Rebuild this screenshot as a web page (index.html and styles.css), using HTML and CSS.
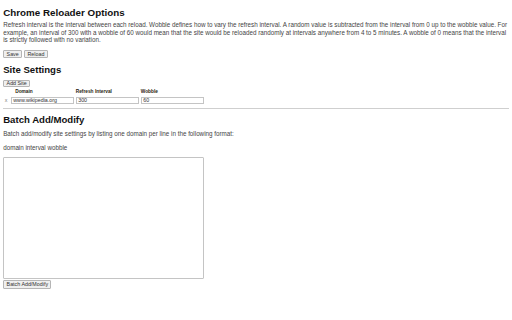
FILE: index.html
```html
<!DOCTYPE html>
<html>
<head>
<meta charset="utf-8">
<title>Chrome Reloader Options</title>
<link rel="stylesheet" href="styles.css">
</head>
<body class="page">
  <h1 class="title">Chrome Reloader Options</h1>
  <p class="intro">Refresh interval is the interval between each reload. Wobble defines how to vary the refresh interval. A random value is subtracted from the interval from 0 up to the wobble value. For example, an interval of 300 with a wobble of 60 would mean that the site would be reloaded randomly at intervals anywhere from 4 to 5 minutes. A wobble of 0 means that the interval is strictly followed with no variation.</p>
  <div class="actions">
    <button class="btn">Save</button>
    <button class="btn">Reload</button>
  </div>

  <h2 class="section section-site">Site Settings</h2>
  <div class="add-row"><button class="btn">Add Site</button></div>
  <div class="sites">
    <span class="col-head col-domain">Domain</span>
    <span class="col-head">Refresh Interval</span>
    <span class="col-head">Wobble</span>
    <span class="remove">X</span>
    <input class="field" type="text" value="www.wikipedia.org">
    <input class="field" type="text" value="300">
    <input class="field" type="text" value="60">
  </div>
  <hr class="rule">

  <h2 class="section section-batch">Batch Add/Modify</h2>
  <p class="note note-first">Batch add/modify site settings by listing one domain per line in the following format:</p>
  <p class="note">domain interval wobble</p>
  <textarea class="batch"></textarea>
  <div class="batch-actions"><button class="btn">Batch Add/Modify</button></div>
</body>
</html>
```
FILE: styles.css
```css
html, body {
  margin: 0;
  background: #ffffff;
}
.page {
  padding: 3px 3.2px 0 3.2px;
  font-family: "Liberation Sans", Arial, sans-serif;
  font-size: 6.28px;
  color: #333;
}
.title {
  margin: 3.6px 0 0 0;
  font-size: 9.8px;
  line-height: 11px;
  font-weight: bold;
  color: #111;
}
.intro {
  margin: 3.9px 0 0 0;
  line-height: 7.36px;
  color: #444;
}
.actions {
  margin-top: 6.7px;
  display: flex;
  gap: 2px;
}
.btn {
  font-family: "Liberation Sans", Arial, sans-serif;
  font-size: 5.33px;
  line-height: 5px;
  padding: 0.5px 2.4px;
  border: 1px solid #b5b5b5;
  border-radius: 1px;
  background: #efefef;
  color: #333;
  margin: 0;
}
.section {
  margin: 0;
  font-size: 9.6px;
  line-height: 11px;
  font-weight: bold;
  color: #111;
}
.section-site { margin-top: 5.8px; }
.add-row {
  margin-top: 4.8px;
  display: flex;
}
.add-row .btn { line-height: 4.5px; }
.sites {
  margin-top: 2px;
  display: grid;
  grid-template-columns: 6px 63.5px 63.5px 63.5px;
  column-gap: 1.5px;
  row-gap: 1.4px;
  align-items: center;
}
.col-head {
  font-size: 4.8px;
  line-height: 6px;
  font-weight: bold;
  color: #2a1d10;
}
.col-domain {
  grid-column: 2;
  padding-left: 4.5px;
}
.remove {
  grid-column: 1;
  font-size: 4px;
  color: #666;
  text-align: center;
}
.field {
  box-sizing: border-box;
  width: 63.5px;
  height: 7.4px;
  margin: 0;
  padding: 0 1.5px;
  border: 1px solid #c4c4c4;
  font-family: "Liberation Sans", Arial, sans-serif;
  font-size: 5.33px;
  color: #333;
  background: #fff;
}
.rule {
  margin: 3.6px 0 0 0;
  border: 0;
  border-top: 1px solid #cfcfcf;
  height: 0;
}
.section-batch { margin-top: 5px; }
.note {
  margin: 6.4px 0 0 0;
  line-height: 7.36px;
  color: #444;
}
.note-first { margin-top: 5.6px; }
.batch {
  display: block;
  box-sizing: border-box;
  width: 200.7px;
  height: 122.3px;
  margin: 5.3px 0 0 0;
  border: 1px solid #c4c4c4;
  border-radius: 1px;
  resize: none;
}
.batch-actions {
  margin-top: 1.3px;
  display: flex;
}
.batch-actions .btn { line-height: 5.4px; }
```
